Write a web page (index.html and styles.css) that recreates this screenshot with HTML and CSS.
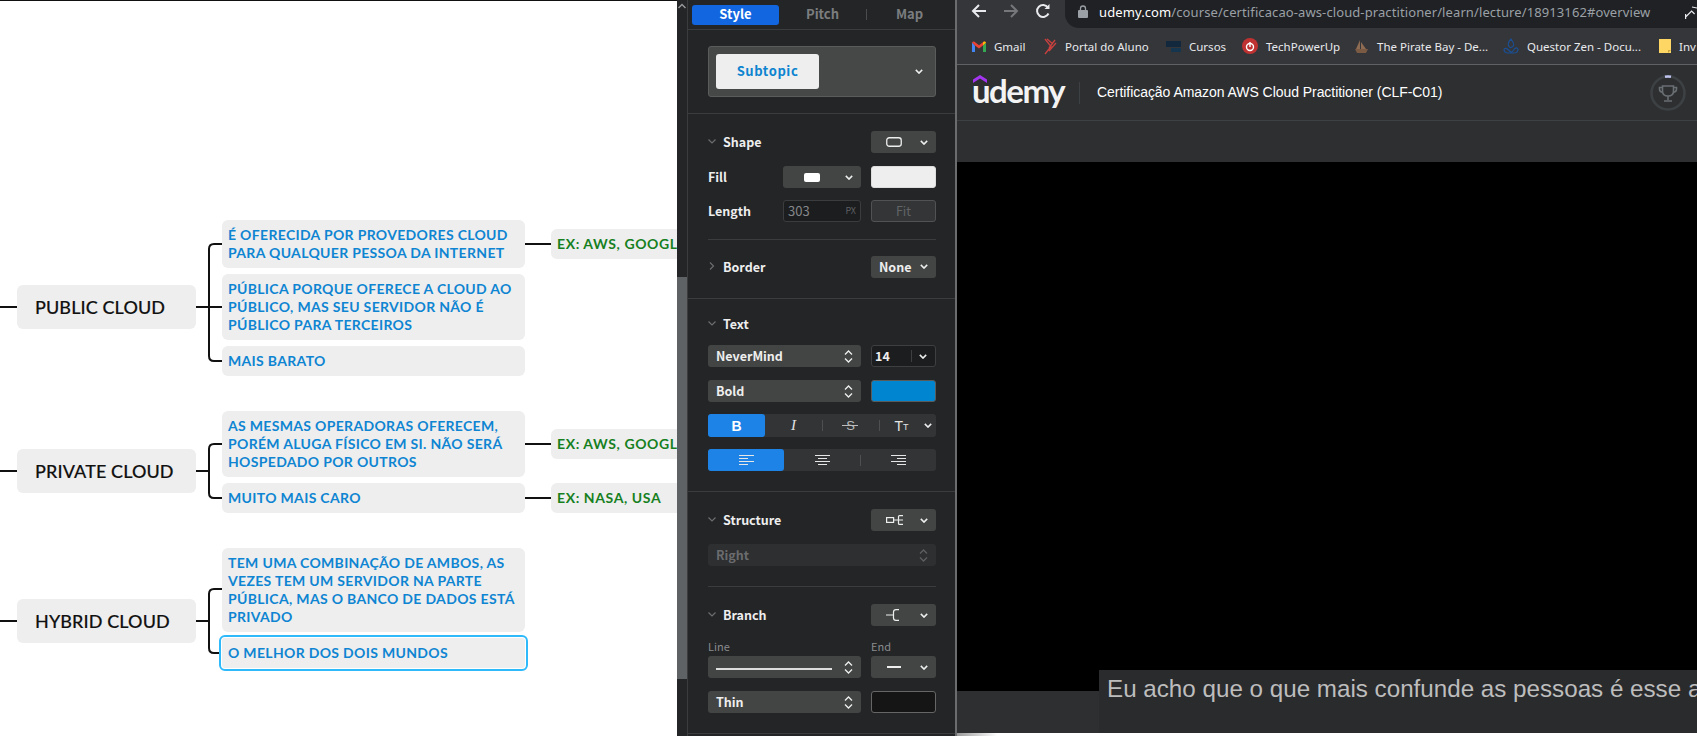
FILE: index.html
```html
<!DOCTYPE html>
<html lang="pt">
<head>
<meta charset="utf-8">
<title>Mind map and Udemy</title>
<link rel="stylesheet" href="styles.css">
</head>
<body>
<div class="canvas">
  <svg class="wires" width="677" height="736" viewBox="0 0 677 736" fill="none" stroke="#111" stroke-width="2">
    <path d="M0 307H17M0 471H17M0 621H17"/>
    <path d="M196 307H222M222 244H214Q209 244 209 249V356Q209 361 214 361H222M525 244H551"/>
    <path d="M196 471H209M222 444H214Q209 444 209 449V493Q209 498 214 498H222M525 444H551M525 498H551"/>
    <path d="M196 621H209M222 589H214Q209 589 209 594V648Q209 653 214 653H220"/>
  </svg>
  <div class="node topic t1">PUBLIC CLOUD</div>
  <div class="node topic t2">PRIVATE CLOUD</div>
  <div class="node topic t3">HYBRID CLOUD</div>
  <div class="node sub s1">É OFERECIDA POR PROVEDORES CLOUD PARA QUALQUER PESSOA DA INTERNET</div>
  <div class="node sub s2">PÚBLICA PORQUE OFERECE A CLOUD AO PÚBLICO, MAS SEU SERVIDOR NÃO É PÚBLICO PARA TERCEIROS</div>
  <div class="node sub s3">MAIS BARATO</div>
  <div class="node sub s4">AS MESMAS OPERADORAS OFERECEM, PORÉM ALUGA FÍSICO EM SI. NÃO SERÁ HOSPEDADO POR OUTROS</div>
  <div class="node sub s5">MUITO MAIS CARO</div>
  <div class="node sub s6">TEM UMA COMBINAÇÃO DE AMBOS, AS VEZES TEM UM SERVIDOR NA PARTE PÚBLICA, MAS O BANCO DE DADOS ESTÁ PRIVADO</div>
  <div class="node sub s7">O MELHOR DOS DOIS MUNDOS</div>
  <div class="node ex e1">EX: AWS, GOOGLE</div>
  <div class="node ex e2">EX: AWS, GOOGLE</div>
  <div class="node ex e3">EX: NASA, USA</div>
</div>

<div class="scrollbar">
  <svg class="scroll-up" width="10" height="8" viewBox="0 0 10 8" fill="none" stroke="#9a9a9a" stroke-width="1.4"><path d="M1.5 6L5 2.5L8.500 6"/></svg>
  <div class="scroll-thumb"></div>
</div>

<aside class="panel">
  <nav class="tabs">
    <span class="tab tab-on">Style</span>
    <span class="tab">Pitch</span>
    <span class="tab tab-sep">Map</span>
  </nav>

  <section class="sec sec-style">
    <div class="preview">
      <span class="preview-chip">Subtopic</span>
      <svg class="ic-chev" viewBox="0 0 10 6"><path d="M1 1l4 4 4-4"/></svg>
    </div>
  </section>

  <section class="sec">
    <div class="row">
      <span class="head"><svg class="ic-fold" width="8" height="5" viewBox="0 0 8 5"><path d="M.5.5L4 4 7.500.5"/></svg>Shape</span>
      <span class="ctl w65">
        <svg class="ic-main" width="16" height="10" viewBox="0 0 16 10"><rect x=".75" y=".75" width="14.500" height="8.500" rx="2.500" fill="none" stroke="#eee" stroke-width="1.300"/></svg>
        <svg class="ic-chev" viewBox="0 0 10 6"><path d="M1 1l4 4 4-4"/></svg>
      </span>
    </div>
    <div class="row mt13">
      <span class="label">Fill</span>
      <span class="ctl w78 push">
        <span class="fill-dot"></span>
        <svg class="ic-chev" viewBox="0 0 10 6"><path d="M1 1l4 4 4-4"/></svg>
      </span>
      <span class="swatch sw-light"></span>
    </div>
    <div class="row mt12">
      <span class="label">Length</span>
      <span class="input w78 push"><span>303</span><small>PX</small></span>
      <span class="fit">Fit</span>
    </div>
    <div class="rule mt17"></div>
    <div class="row mt16">
      <span class="head"><svg class="ic-fold" width="8" height="8" viewBox="0 0 8 8"><path d="M2 .5L5.500 4 2 7.500"/></svg>Border</span>
      <span class="ctl w65 text-ctl">None
        <svg class="ic-chev" viewBox="0 0 10 6"><path d="M1 1l4 4 4-4"/></svg>
      </span>
    </div>
  </section>

  <section class="sec sec-text">
    <div class="row">
      <span class="head"><svg class="ic-fold" width="8" height="5" viewBox="0 0 8 5"><path d="M.5.5L4 4 7.500.5"/></svg>Text</span>
    </div>
    <div class="row mt10">
      <span class="select w153">NeverMind
        <svg class="ic-updown" width="9" height="13" viewBox="0 0 9 13"><path d="M1 4.500L4.500 1 8 4.500M1 8.500L4.500 12 8 8.500"/></svg>
      </span>
      <span class="size"><span class="size-val">14</span>
        <svg class="ic-chev" viewBox="0 0 10 6"><path d="M1 1l4 4 4-4"/></svg>
      </span>
    </div>
    <div class="row mt13">
      <span class="select w153">Bold
        <svg class="ic-updown" width="9" height="13" viewBox="0 0 9 13"><path d="M1 4.500L4.500 1 8 4.500M1 8.500L4.500 12 8 8.500"/></svg>
      </span>
      <span class="swatch sw-blue"></span>
    </div>
    <div class="seg seg-format mt12">
      <span class="seg-item seg-on fmt-b">B</span>
      <span class="seg-item fmt-i">I</span>
      <span class="seg-item seg-div fmt-s">S</span>
      <span class="seg-item seg-div fmt-t">T<small>T</small>
        <svg class="ic-chev fmt-chev" viewBox="0 0 10 6"><path d="M1 1l4 4 4-4"/></svg>
      </span>
    </div>
    <div class="seg seg-align mt12">
      <span class="seg-item seg-on">
        <svg class="ic-align" width="15" height="11" viewBox="0 0 15 11"><path d="M0 .5H15M0 3.500H9M0 6.500H15M0 9.500H9"/></svg>
      </span>
      <span class="seg-item">
        <svg class="ic-align" width="15" height="11" viewBox="0 0 15 11"><path d="M0 .5H15M3 3.500H12M0 6.500H15M3 9.500H12"/></svg>
      </span>
      <span class="seg-item seg-div">
        <svg class="ic-align" width="15" height="11" viewBox="0 0 15 11"><path d="M0 .5H15M6 3.500H15M0 6.500H15M6 9.500H15"/></svg>
      </span>
    </div>
  </section>

  <section class="sec">
    <div class="row">
      <span class="head"><svg class="ic-fold" width="8" height="5" viewBox="0 0 8 5"><path d="M.5.5L4 4 7.500.5"/></svg>Structure</span>
      <span class="ctl w65">
        <svg class="ic-main" width="18" height="10" viewBox="0 0 18 10" fill="none" stroke="#eee" stroke-width="1.200"><rect x=".6" y="2.600" width="7" height="4.800"/><path d="M7.500 5H17M17 .6H13.500Q12.500 .6 12.500 1.600V8.400Q12.500 9.400 13.500 9.400H17"/></svg>
        <svg class="ic-chev" viewBox="0 0 10 6"><path d="M1 1l4 4 4-4"/></svg>
      </span>
    </div>
    <div class="select select-off mt13">Right
      <svg class="ic-updown" width="9" height="13" viewBox="0 0 9 13"><path d="M1 4.500L4.500 1 8 4.500M1 8.500L4.500 12 8 8.500"/></svg>
    </div>
    <div class="rule mt20"></div>
    <div class="row mt17">
      <span class="head"><svg class="ic-fold" width="8" height="5" viewBox="0 0 8 5"><path d="M.5.5L4 4 7.500.5"/></svg>Branch</span>
      <span class="ctl w65">
        <svg class="ic-main" width="14" height="12" viewBox="0 0 14 12" fill="none" stroke="#eee" stroke-width="1.200"><path d="M0 6H7M13 .6H10Q7.500 .6 7.500 3V9Q7.500 11.400 10 11.400H13"/></svg>
        <svg class="ic-chev" viewBox="0 0 10 6"><path d="M1 1l4 4 4-4"/></svg>
      </span>
    </div>
    <div class="row mt14 small-labels"><span>Line</span><span class="end-label">End</span></div>
    <div class="row mt4">
      <span class="select w153"><span class="line-sample"></span>
        <svg class="ic-updown" width="9" height="13" viewBox="0 0 9 13"><path d="M1 4.500L4.500 1 8 4.500M1 8.500L4.500 12 8 8.500"/></svg>
      </span>
      <span class="ctl w65"><span class="dash"></span>
        <svg class="ic-chev" viewBox="0 0 10 6"><path d="M1 1l4 4 4-4"/></svg>
      </span>
    </div>
    <div class="row mt13">
      <span class="select w153">Thin
        <svg class="ic-updown" width="9" height="13" viewBox="0 0 9 13"><path d="M1 4.500L4.500 1 8 4.500M1 8.500L4.500 12 8 8.500"/></svg>
      </span>
      <span class="swatch sw-dark"></span>
    </div>
  </section>
</aside>

<main class="browser">
  <header class="toolbar">
    <svg class="nav nav-back" width="16" height="14" viewBox="0 0 16 14" fill="none" stroke="#e8eaed" stroke-width="2"><path d="M15 7H2M8 1L2 7l6 6"/></svg>
    <svg class="nav nav-fwd" width="16" height="14" viewBox="0 0 16 14" fill="none" stroke="#75777b" stroke-width="2"><path d="M1 7H14M8 1l6 6-6 6"/></svg>
    <svg class="nav nav-reload" width="16" height="16" viewBox="0 0 16 16" fill="none" stroke="#e8eaed" stroke-width="2"><path d="M13.500 10.500A6 6 0 1 1 13 4.500"/><path d="M14.500 1V6H9.500" fill="#e8eaed" stroke="none"/></svg>
    <div class="omnibox">
      <svg class="lock" width="10" height="13" viewBox="0 0 10 13"><path d="M2.500 5V3.500a2.500 2.500 0 0 1 5 0V5" fill="none" stroke="#9aa0a6" stroke-width="1.300"/><rect y="5" width="10" height="8" rx="1" fill="#9aa0a6"/></svg>
      <span class="url"><b>udemy.com</b>/course/certificacao-aws-cloud-practitioner/learn/lecture/18913162#overview</span>
      <svg class="share" width="12" height="14" viewBox="0 0 12 14" fill="none" stroke="#e8eaed" stroke-width="1.200"><path d="M.6 14V9M.6 12l6-6 3 3M12 3 7 2"/></svg>
    </div>
  </header>

  <div class="bookmarks">
    <span class="bm">
      <svg width="14" height="11" viewBox="0 0 14 11"><path d="M0 1.500V11H3V4.500z" fill="#4285f4"/><path d="M14 1.500V11H11V4.500z" fill="#34a853"/><path d="M0 1.500Q1 0 2.500 .7L7 4.200 11.500 .7Q13 0 14 1.500L11 4.500 7 7.500 3 4.500z" fill="#ea4335"/><path d="M11 1.600 11.500 .7Q13 0 14 1.500L11 4.500z" fill="#fbbc04"/></svg>
      Gmail
    </span>
    <span class="bm">
      <svg width="13" height="17" viewBox="0 0 13 17" fill="none" stroke="#c8413f" stroke-width="1.300"><path d="M1 1l6 7.500L1 16M3 1l6 5M5 13l7-8M5 10l6-8"/></svg>
      Portal do Aluno
    </span>
    <span class="bm">
      <svg width="15" height="13" viewBox="0 0 15 13"><rect y="1" width="15" height="6" fill="#12293d"/><rect x="5" y="8" width="10" height="4" fill="#16354f"/></svg>
      Cursos
    </span>
    <span class="bm">
      <svg width="16" height="16" viewBox="0 0 16 16"><circle cx="8" cy="8" r="8" fill="#c03232"/><circle cx="8" cy="9" r="3.500" fill="none" stroke="#fff" stroke-width="1.400"/><path d="M8 4v5" stroke="#fff" stroke-width="1.400"/></svg>
      TechPowerUp
    </span>
    <span class="bm">
      <svg width="15" height="15" viewBox="0 0 15 15"><path d="M1 10h13l-2 4H3z" fill="#7b5a44"/><path d="M6 1v9H2zM7 3l5 7H7z" fill="#8e6b53"/></svg>
      The Pirate Bay - De...
    </span>
    <span class="bm">
      <svg width="16" height="16" viewBox="0 0 16 16" fill="none" stroke="#1b4f92" stroke-width="1.200"><path d="M8 1Q4.500 5 5.500 7.500T8 9.500 10.500 7.500 8 1ZM1 11Q3 9.500 5 11.500T8 14 11 11.500 15 11M1 11Q1 15 5 15H11Q15 15 15 11"/></svg>
      Questor Zen - Docu...
    </span>
    <span class="bm">
      <svg width="12" height="14" viewBox="0 0 12 14"><path d="M0 0H12V14H0z" fill="#fdd663"/><path d="M9 14V11H12z" fill="#c9a53e"/></svg>
      Inv
    </span>
  </div>

  <div class="course-head">
    <div class="brand">
      <svg class="brand-mark" width="14" height="8" viewBox="0 0 14 8"><path d="M0 8V4.500L7 0l7 4.500V8L7 3.500z" fill="#a435f0"/></svg>
      <span class="brand-name">udemy</span>
    </div>
    <span class="course-title">Certificação Amazon AWS Cloud Practitioner (CLF-C01)</span>
    <svg class="trophy" width="36" height="36" viewBox="0 0 36 36" fill="none">
      <circle cx="18" cy="18" r="16.500" stroke="#3e4143" stroke-width="2.500"/>
      <path d="M15 1.800A16.500 16.500 0 0 1 21 1.800" stroke="#c0c4f0" stroke-width="2.500"/>
      <path d="M12.500 11H23.500V16Q23.500 21 18 21T12.500 16ZM12.500 12.500H9.500V14Q9.500 17 13 17.500M23.500 12.500H26.500V14Q26.500 17 23 17.500M18 21V25M14 26H22" stroke="#6a6f73" stroke-width="1.600"/>
    </svg>
  </div>
  <div class="course-bar"></div>

  <div class="video">
    <div class="caption">Eu acho que o que mais confunde as pessoas é esse aqui</div>
  </div>
  <div class="video-foot"></div>
  <div class="edge"></div>
</main>
</body>
</html>
```
FILE: styles.css
```css
* { box-sizing: border-box; }
html, body { margin: 0; height: 736px; overflow: hidden; }
body { display: flex; background: #fff; }

/* Mind map */
.canvas {
  position: relative;
  flex: 0 0 677px;
  height: 736px;
  overflow: hidden;
  background: #fff;
  border-top: 1px solid #111;
  font-family: "Lato", sans-serif;
}
.wires { position: absolute; left: 0; top: -1px; }
.node { position: absolute; background: #eee; border-radius: 6px; }
.topic {
  left: 17px; width: 179px; height: 44px;
  padding-left: 18px;
  font-size: 18px; line-height: 44px; font-weight: 500; color: #111;
  -webkit-text-stroke: .15px #111;
  letter-spacing: .1px;
}
.t1 { top: 284px; }
.t2 { top: 448px; }
.t3 { top: 598px; }
.sub {
  left: 222px; width: 303px;
  padding: 6px;
  font-size: 14px; line-height: 18px; font-weight: 700; color: #0e85d2;
  letter-spacing: .33px;
}
.s1 { top: 219px; height: 48px; }
.s2 { top: 273px; height: 66px; }
.s3 { top: 345px; height: 30px; }
.s4 { top: 410px; height: 66px; }
.s5 { top: 482px; height: 30px; }
.s6 { top: 547px; height: 84px; }
.s7 {
  top: 637px; height: 30px;
  border-radius: 3px;
  outline: 2px solid #2eb9fb; outline-offset: 1px;
}
.ex {
  left: 551px; width: 170px; height: 30px;
  padding: 6px;
  font-size: 14px; line-height: 18px; font-weight: 700; color: #16801f;
  letter-spacing: .6px;
}
.e1 { top: 228px; }
.e2 { top: 428px; }
.e3 { top: 482px; }

/* Scrollbar */
.scrollbar {
  position: relative;
  flex: 0 0 10px;
  height: 736px;
  background: #232527;
  padding-top: 277px;
}
.scroll-up { position: absolute; left: 0; top: 2px; }
.scroll-thumb { height: 402px; background: #5f6265; }

/* Inspector */
.panel {
  flex: 0 0 270px;
  height: 736px;
  background: #232527;
  border-left: 1px solid #3a3c3e;
  border-right: 2px solid #6b6c6e;
  font-family: "Noto Sans CJK SC", "Noto Sans", sans-serif;
  font-size: 12.500px;
  color: #eee;
  overflow: hidden;
}
.tabs {
  display: grid;
  grid-template-columns: 87px 87px 87px;
  height: 30px;
  padding: 5px 0 0 4px;
  border-bottom: 1px solid #3a3c3e;
}
.tab {
  height: 20px; line-height: 18px; text-align: center;
  font-size: 13px; font-weight: 700; color: #7b7d7f;
  border-radius: 3px;
  position: relative;
}
.tab-on { background: #1266e0; color: #fff; }
.tab-sep::before {
  content: ""; position: absolute; left: 0; top: 4px; width: 1px; height: 11px; background: #4a4c4e;
}
.sec {
  padding: 17px 19px 20px 20px;
  border-bottom: 1px solid #3a3c3e;
}
.sec-style { padding: 16px 19px 16px 20px; height: 84px; }
.sec-text { padding-top: 14px; }
.preview {
  display: flex; align-items: center; justify-content: space-between;
  height: 51px;
  padding: 0 12px 0 7px;
  background: #464847;
  border: 1px solid #5a5b5b;
  border-radius: 3px;
}
.preview-chip {
  width: 103px; height: 35px; line-height: 33px; text-align: center;
  background: #eee; border-radius: 3px;
  font-size: 13px; font-weight: 700; color: #0d84d0; letter-spacing: .6px;
}
.row { display: flex; align-items: center; justify-content: space-between; height: 22px; }
.mt4 { margin-top: 4px; }
.mt10 { margin-top: 10px; }
.mt12 { margin-top: 12px; }
.mt13 { margin-top: 13px; }
.mt14 { margin-top: 14px; }
.mt16 { margin-top: 16px; }
.mt17 { margin-top: 17px; }
.mt20 { margin-top: 20px; }
.head { display: flex; align-items: center; font-weight: 700; color: #eee; padding-bottom: 2px; }
.ic-fold { margin: 0 7px 0 0; fill: none; stroke: #6b6d6f; stroke-width: 1.200; flex: none; }
.label { font-weight: 700; color: #eee; padding-bottom: 2px; }
.push { margin-left: auto; margin-right: 10px; }
.w65 { width: 65px; }
.w78 { width: 78px; }
.w153 { width: 153px; }
.ctl {
  display: flex; align-items: center; justify-content: space-between;
  height: 22px;
  padding: 0 8px 0 15px;
  background: #434544;
  border-radius: 3px;
  color: #eee;
}
.text-ctl { padding-left: 8px; padding-bottom: 2px; font-weight: 700; }
.ic-chev { flex: none; width: 8px; height: 5px; fill: none; stroke: #eee; stroke-width: 1.900; }
.ic-main { flex: none; }
.fill-dot { width: 16px; height: 9px; background: #fff; border-radius: 2px; margin-left: 6px; }
.swatch { width: 65px; height: 22px; border-radius: 3px; border: 1px solid #5a5b5b; }
.sw-light { background: #eee; border-color: #ddd; }
.sw-blue { background: #0085d0; }
.sw-dark { background: #151515; border-color: #666; }
.input {
  display: flex; align-items: center; justify-content: space-between;
  height: 22px; padding: 0 4px 1px;
  background: #1b1d1f; border: 1px solid #3a3c3e; border-radius: 3px;
  color: #85878a; font-size: 13px;
}
.input small { font-size: 9px; color: #5d5f61; }
.fit {
  width: 65px; height: 22px; line-height: 19px; text-align: center;
  background: #333537; border: 1px solid #505254; border-radius: 3px; color: #626466;
}
.rule { height: 1px; background: #3a3c3e; }
.select {
  display: flex; align-items: center; justify-content: space-between;
  height: 22px; padding: 0 8px 1px;
  background: #434544; border-radius: 3px;
  font-weight: 700; color: #eee;
}
.select-off { background: #2d2f31; color: #6a6c6e; }
.ic-updown { flex: none; fill: none; stroke: #eee; stroke-width: 1.300; margin-top: 1px; }
.select-off .ic-updown { stroke: #5d5f61; }
.size {
  display: flex; align-items: center; justify-content: space-between;
  width: 65px; height: 22px; padding: 0 8px 0 3px;
  background: #1b1d1f; border: 1px solid #3d3f41; border-radius: 3px;
}
.size-val { flex: 1; font-weight: 700; border-right: 1px solid #3d3f41; line-height: 12px; margin-right: 7px; }
.seg {
  display: grid;
  height: 22px;
  background: #323436;
  border-radius: 3px;
}
.seg-format { grid-template-columns: 57px 57px 57px 57px; height: 23px; }
.seg-align { grid-template-columns: 76px 76px 76px; }
.seg-item {
  position: relative;
  display: flex; align-items: center; justify-content: center;
  color: #e4e4e4; border-radius: 3px;
}
.seg-on { background: #1e83e6; color: #fff; }
.seg-div::before {
  content: ""; position: absolute; left: 0; top: 6px; width: 1px; height: 11px; background: #4d4f51;
}
.fmt-b { font-family: "Liberation Sans", sans-serif; font-size: 14px; font-weight: 700; }
.fmt-i { font-family: "Liberation Serif", serif; font-size: 15px; font-style: italic; }
.fmt-s { font-family: "Liberation Sans", sans-serif; font-size: 13px; color: #bbb; }
.fmt-s::after {
  content: ""; position: absolute; left: 20px; top: 11px; width: 16px; height: 1px; background: #bbb;
}
.fmt-t { font-family: "Liberation Sans", sans-serif; font-size: 14px; padding-right: 12px; }
.fmt-t small { font-size: 9px; align-self: center; margin-top: 3px; }
.fmt-chev { position: absolute; right: 4px; top: 9px; }
.ic-align { fill: none; stroke: #e6e6e6; stroke-width: 1; }
.small-labels { height: 12px; justify-content: flex-start; font-size: 11px; font-weight: 400; color: #8a8c8e; }
.small-labels span:first-child { flex: 0 0 163px; }
.line-sample { width: 116px; height: 2px; background: #ddd; margin-top: 4px; }
.dash { width: 14px; height: 2px; background: #eee; margin-left: 1px; }

/* Browser */
.browser {
  flex: 1 1 auto;
  min-width: 0;
  height: 736px;
  display: flex; flex-direction: column;
  background: #2d2f31;
  font-family: "Noto Sans", sans-serif;
}
.toolbar {
  display: flex; align-items: center;
  height: 28px;
  flex: none;
  padding-left: 14px;
  background: #35363a;
}
.nav { flex: none; }
.nav-back { margin-top: -6px; }
.nav-fwd { margin: -6px 0 0 16px; }
.nav-reload { margin: -6px 0 0 16px; }
.omnibox {
  display: flex; align-items: center;
  flex: 1;
  min-width: 0;
  height: 28px;
  margin-left: 14px;
  padding: 0 0 5px 13px;
  background: #202124;
  border-radius: 0 0 0 14px;
}
.lock { flex: none; }
.url {
  margin-left: 11px;
  font-size: 13px; color: #9aa0a6; white-space: nowrap;
  flex: 1;
  letter-spacing: .1px;
}
.url b { font-weight: 400; color: #fff; }
.share { flex: none; }
.bookmarks {
  display: grid;
  grid-template-columns: 72px 122px 76px 112px 149px 156px 40px;
  flex: none;
  height: 37px;
  padding-left: 15px;
  background: #35363a;
  border-bottom: 1px solid #606164;
  align-items: center;
  overflow: hidden;
  font-size: 11.500px;
  color: #e8eaed;
}
.bm { display: flex; align-items: center; gap: 8px; white-space: nowrap; }
.bm svg { flex: none; }
.course-head {
  display: flex; align-items: center;
  flex: none;
  height: 56px;
  padding-left: 16px;
  border-bottom: 1px solid #3e4143;
}
.brand { position: relative; width: 107px; height: 32px; }
.brand::after {
  content: ""; position: absolute; right: 0; top: 5px; width: 1px; height: 22px; background: #3e4143;
}
.brand-mark { position: absolute; left: 0; top: -2px; }
.brand-name {
  position: absolute; left: -1px; top: -7px;
  font-family: "Lato", sans-serif;
  font-size: 33px; line-height: 40px; font-weight: 700; color: #f3f3f3; letter-spacing: -1.5px;
}
.course-title {
  margin-left: 17px;
  margin-top: -1px;
  font-family: "Liberation Sans", sans-serif;
  font-size: 14px; color: #fff;
  letter-spacing: -.05px;
  flex: 1;
}
.trophy { flex: none; margin-right: 11px; }
.course-bar { flex: none; height: 41px; }
.video { position: relative; flex: 1 1 auto; background: #000; }
.caption {
  position: absolute; left: 142px; right: 0; top: 508px; height: 63px;
  padding: 3px 0 0 8px;
  overflow: hidden;
  background: #2a2b2d;
  font-family: "Liberation Sans", sans-serif;
  font-size: 24.200px; line-height: 31px; color: #bdbdbd; white-space: nowrap;
}
.video-foot { flex: none; height: 42px; }
.edge { flex: none; height: 3px; background: linear-gradient(90deg, #9a9a9a, #fff 40px); }
```
